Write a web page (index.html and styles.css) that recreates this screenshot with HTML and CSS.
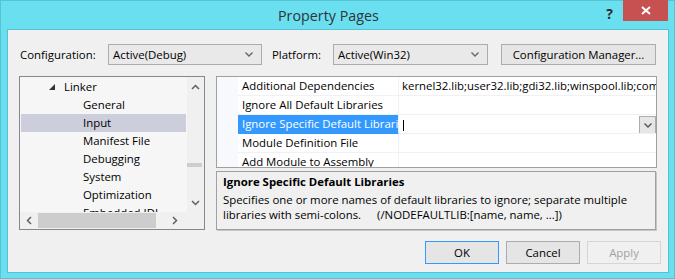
FILE: index.html
```html
<!DOCTYPE html>
<html>
<head>
<meta charset="utf-8">
<link rel="stylesheet" href="styles.css">
</head>
<body>
<div class="window">
  <div class="titlebar">
    <div class="title">Property Pages</div>
    <div class="help">?</div>
    <div class="close">
      <svg width="10" height="9" viewBox="0 0 10 9"><path d="M1 1 L9 8 M9 1 L1 8" stroke="#fff" stroke-width="2" fill="none"/></svg>
    </div>
  </div>
  <div class="client">
    <div class="toprow">
      <span class="lbl lbl-cfg">Configuration:</span>
      <div class="combo combo-cfg"><span class="combo-text">Active(Debug)</span><svg class="chev" width="8" height="5" viewBox="0 0 8 5"><path d="M0.5 0.5 L4 4 L7.5 0.5" stroke="#666" stroke-width="1.4" fill="none"/></svg></div>
      <span class="lbl lbl-plat">Platform:</span>
      <div class="combo combo-plat"><span class="combo-text">Active(Win32)</span><svg class="chev" width="8" height="5" viewBox="0 0 8 5"><path d="M0.5 0.5 L4 4 L7.5 0.5" stroke="#666" stroke-width="1.4" fill="none"/></svg></div>
      <div class="btn btn-mgr">Configuration Manager...</div>
    </div>
    <div class="panels">
      <div class="tree">
        <div class="tree-main">
          <div class="tree-list">
            <div class="trow lvl1"><svg class="tri" width="6" height="6" viewBox="0 0 6 6"><path d="M6 0 L6 6 L0 6 Z" fill="#333"/></svg><span>Linker</span></div>
            <div class="trow lvl2">General</div>
            <div class="trow lvl2 sel">Input</div>
            <div class="trow lvl2">Manifest File</div>
            <div class="trow lvl2">Debugging</div>
            <div class="trow lvl2">System</div>
            <div class="trow lvl2">Optimization</div>
            <div class="trow lvl2">Embedded IDL</div>
          </div>
          <div class="vscroll">
            <svg class="arr" width="9" height="6" viewBox="0 0 9 6"><path d="M1 5 L4.5 1.5 L8 5" stroke="#606060" stroke-width="1.5" fill="none"/></svg>
            <div class="vtrack"><div class="vthumb"></div></div>
            <svg class="arr" width="9" height="6" viewBox="0 0 9 6"><path d="M1 1 L4.5 4.5 L8 1" stroke="#606060" stroke-width="1.5" fill="none"/></svg>
          </div>
        </div>
        <div class="hscroll-row">
          <div class="hscroll">
            <svg class="harr" width="6" height="9" viewBox="0 0 6 9"><path d="M5 1 L1.5 4.5 L5 8" stroke="#606060" stroke-width="1.5" fill="none"/></svg>
            <div class="hthumb"></div>
            <svg class="harr harr-r" width="6" height="9" viewBox="0 0 6 9"><path d="M1 1 L4.5 4.5 L1 8" stroke="#606060" stroke-width="1.5" fill="none"/></svg>
          </div>
          <div class="corner"></div>
        </div>
      </div>
      <div class="right">
        <div class="grid">
          <div class="grow"><div class="gutter"></div><div class="gname">Additional Dependencies</div><div class="gval">kernel32.lib;user32.lib;gdi32.lib;winspool.lib;comdlg32.lib;advapi32.lib</div></div>
          <div class="grow"><div class="gutter"></div><div class="gname">Ignore All Default Libraries</div><div class="gval"></div></div>
          <div class="grow"><div class="gutter"></div><div class="gname gsel">Ignore Specific Default Libraries</div><div class="gval gval-edit"><span class="caret"></span><div class="ddbtn"><svg width="8" height="5" viewBox="0 0 8 5"><path d="M0.5 0.5 L4 4 L7.5 0.5" stroke="#555" stroke-width="1.4" fill="none"/></svg></div></div></div>
          <div class="grow"><div class="gutter"></div><div class="gname">Module Definition File</div><div class="gval"></div></div>
          <div class="grow"><div class="gutter"></div><div class="gname">Add Module to Assembly</div><div class="gval"></div></div>
        </div>
        <div class="desc">
          <div class="desc-title">Ignore Specific Default Libraries</div>
          <div class="desc-text">Specifies one or more names of default libraries to ignore; separate multiple</div>
          <div class="desc-text">libraries with semi-colons.<span class="switch">(/NODEFAULTLIB:[name, name, ...])</span></div>
        </div>
      </div>
    </div>
    <div class="buttons">
      <div class="btn btn-dlg btn-default">OK</div>
      <div class="btn btn-dlg">Cancel</div>
      <div class="btn btn-dlg btn-disabled">Apply</div>
    </div>
  </div>
</div>
</body>
</html>
```

FILE: styles.css
```css
* { box-sizing: border-box; }
html, body { margin: 0; padding: 0; }
body {
  width: 675px;
  height: 279px;
  overflow: hidden;
  font-family: "Open Sans", "Noto Sans", sans-serif;
  font-size: 11.4px;
  color: #000;
}
.window {
  width: 675px;
  height: 279px;
  background: #69dff0;
  box-shadow: inset 0 0 0 1px #55c3d5;
}
.titlebar {
  height: 29px;
  display: flex;
  align-items: flex-start;
}
.title {
  margin-left: 278px;
  margin-top: 6px;
  font-size: 14.3px;
  line-height: 20px;
  color: #2f3338;
}
.help {
  margin-left: auto;
  margin-top: 5px;
  margin-right: 10px;
  font-size: 14px;
  font-weight: bold;
  line-height: 18px;
  color: #2a2a2a;
}
.close {
  width: 45px;
  height: 21px;
  margin-right: 7px;
  background: #c75050;
  display: flex;
  align-items: center;
  justify-content: center;
}
.client {
  margin-left: 7px;
  width: 662px;
  height: 244px;
  border: 1px solid #58c0d2;
  background: #f0f0f0;
  display: flex;
  flex-direction: column;
}
.toprow {
  margin-top: 14px;
  height: 21px;
  display: flex;
  align-items: center;
  padding-left: 12px;
}
.lbl { display: block; line-height: 21px; white-space: nowrap; }
.lbl-cfg { width: 88px; }
.lbl-plat { width: 61px; margin-left: 10px; }
.combo {
  height: 21px;
  border: 1px solid #acacac;
  background: #e9e9e9;
  display: flex;
  align-items: center;
  padding-left: 4px;
  padding-right: 8px;
}
.combo-cfg { width: 154px; }
.combo-plat { width: 155px; }
.combo-text { flex: 1; line-height: 19px; }
.chev { display: block; }
.btn {
  border: 1px solid #acacac;
  background: #e5e5e5;
  display: flex;
  align-items: center;
  justify-content: center;
  white-space: nowrap;
}
.btn-mgr {
  width: 155px;
  height: 21px;
  margin-left: 13px;
}
.panels {
  margin-top: 11px;
  height: 155px;
  display: flex;
  padding-left: 11px;
}
.tree {
  width: 186px;
  height: 154px;
  border: 1px solid #828790;
  background: #f6f6f6;
  display: flex;
  flex-direction: column;
}
.tree-main {
  height: 135px;
  display: flex;
  overflow: hidden;
}
.tree-list {
  width: 167px;
  padding: 1px 1px 0 1px;
  overflow: hidden;
}
.trow {
  height: 18px;
  line-height: 18px;
  white-space: nowrap;
  display: flex;
  align-items: center;
}
.lvl1 { padding-left: 28px; }
.lvl1 .tri { display: block; margin-right: 9px; }
.lvl2 { padding-left: 62px; }
.sel { background: #cccedb; }
.vscroll {
  width: 17px;
  background: #f0f0f0;
  display: flex;
  flex-direction: column;
  align-items: center;
}
.vscroll .arr { display: block; margin: 7px 0 6px; }
.vtrack {
  flex: 1;
  width: 100%;
  padding-top: 67px;
}
.vthumb {
  width: 15px;
  height: 4px;
  background: #cdcdcd;
}
.hscroll-row {
  height: 17px;
  display: flex;
}
.hscroll {
  width: 167px;
  background: #f0f0f0;
  display: flex;
  align-items: center;
  padding-left: 6px;
}
.harr { display: block; }
.hthumb {
  width: 118px;
  height: 15px;
  margin-left: 6px;
  background: #cdcdcd;
}
.harr-r { margin-left: 16px; }
.corner { flex: 1; background: #f0f0f0; }
.right {
  margin-left: 11px;
  width: 441px;
  display: flex;
  flex-direction: column;
}
.grid {
  height: 92px;
  border: 1px solid #a0a0a0;
  background: #fff;
  overflow: hidden;
}
.grow {
  height: 19px;
  display: flex;
}
.gutter {
  width: 21px;
  background: #f7f9fc;
}
.gname {
  width: 161px;
  padding-left: 4px;
  line-height: 18px;
  white-space: nowrap;
  overflow: hidden;
  border-bottom: 1px solid #eef1f5;
  border-right: 1px solid #eef1f5;
}
.gsel { background: #3399ff; color: #fff; border-bottom-color: #3399ff; }
.gval {
  flex: 1;
  padding-left: 3px;
  line-height: 18px;
  white-space: nowrap;
  overflow: hidden;
  border-bottom: 1px solid #eef1f5;
}
.gval-edit {
  display: flex;
  align-items: flex-start;
  padding-left: 4px;
}
.caret {
  display: block;
  width: 1px;
  height: 11px;
  margin-top: 5px;
  background: #000;
}
.ddbtn {
  margin-left: auto;
  margin-top: 1px;
  width: 17px;
  height: 18px;
  border: 1px solid #acacac;
  background: #e6e6e6;
  display: flex;
  align-items: center;
  justify-content: center;
}
.ddbtn svg { display: block; }
.desc {
  margin-top: 3px;
  width: 440px;
  height: 59px;
  border: 1px solid #a0a0a0;
  box-shadow: 1px 1px 0 #c6c6c6;
  background: #f0f0f0;
  padding: 2px 0 0 6px;
}
.desc-title { font-weight: bold; line-height: 16px; margin-bottom: 2px; }
.desc-text { line-height: 15px; white-space: nowrap; }
.switch { margin-left: 16px; }
.buttons {
  margin-top: 10px;
  display: flex;
  justify-content: flex-end;
  padding-right: 7px;
  gap: 7px;
}
.btn-dlg {
  width: 74px;
  height: 23px;
}
.btn-default { border-color: #3399ff; }
.btn-disabled { border-color: #d5d5d5; background: #f0f0f0; color: #a2a2a2; }
```
